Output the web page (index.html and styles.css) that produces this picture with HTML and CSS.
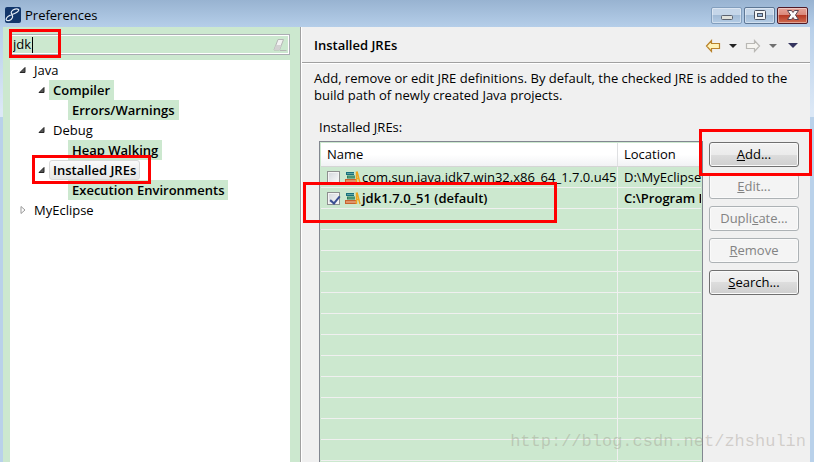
FILE: index.html
```html
<!DOCTYPE html>
<html lang="en">
<head>
  <meta charset="UTF-8">
  <meta name="viewport" content="width=device-width, initial-scale=1.0">
  <title>Preferences</title>
  <link rel="stylesheet" href="styles.css">
</head>
<body>
  <div class="window">
    <header class="titlebar">
      <svg class="titlebar__logo" width="16" height="16" viewBox="0 0 16 16">
        <rect width="16" height="16" rx="2" fill="#12366b"/>
        <path d="M1 12.500C2 14.500 6 14 7.500 10.500C8.500 8 5 6.500 6.500 4.500S12 1 13.500 2.500S10 6.500 7 7.500S1.500 10 1 12.500" fill="none" stroke="#e4ecf5" stroke-width="1.200"/>
      </svg>
      <h1 class="titlebar__text">Preferences</h1>
      <div class="titlebar__buttons">
        <button class="win-button win-button--min" aria-label="Minimize">
          <svg width="12" height="12" viewBox="0 0 12 12"><rect x="0.500" y="6.500" width="11" height="4" rx="1" fill="#dfe1dc" stroke="#5b6270"/></svg>
        </button>
        <button class="win-button" aria-label="Maximize">
          <svg width="12" height="12" viewBox="0 0 12 12"><rect x="0.500" y="1.500" width="11" height="9" rx="1" fill="#f5f5f5" stroke="#4a5160"/><rect x="3.500" y="4.500" width="5" height="3" fill="#9cb9da" stroke="#4a5160"/></svg>
        </button>
        <button class="win-button win-button--close" aria-label="Close">
          <svg width="12" height="12" viewBox="0 0 12 12"><path d="M.500 1.500h4L6 3.500l1.500-2h4L8.500 6l3 4.500h-4L6 8.500l-1.500 2h-4l3-4.500z" fill="#fafafa" stroke="#5b4450"/></svg>
        </button>
      </div>
    </header>

    <div class="content">
      <aside class="sidebar">
        <div class="search">
          <input class="search__input" type="text" value="jdk" aria-label="Filter preferences">
          <span class="search__caret"></span>
          <button class="search__clear" aria-label="Clear">
            <svg width="14" height="14" viewBox="0 0 14 14"><path d="M5 1.500h5.500l-4 10.500H1z" fill="#f2f2f2" stroke="#b5b5b5"/><path d="M3 7h5.500L6.500 12H1z" fill="#d2d2d2"/><path d="M7 12.500h6.500" stroke="#b5b5b5"/></svg>
          </button>
          <span class="mark mark--search"></span>
        </div>

        <ul class="tree">
          <li>
            <div class="tree__row"><svg class="tree__arrow" width="8" height="8" viewBox="0 0 8 8"><path d="M6 1.500V6.500H1z" fill="#555" stroke="#262626"/></svg><span class="tree__label">Java</span></div>
            <ul>
              <li>
                <div class="tree__row"><svg class="tree__arrow" width="8" height="8" viewBox="0 0 8 8"><path d="M6 1.500V6.500H1z" fill="#555" stroke="#262626"/></svg><span class="tree__label tree__label--match">Compiler</span></div>
                <ul>
                  <li><div class="tree__row tree__row--leaf"><span class="tree__label tree__label--match">Errors/Warnings</span></div></li>
                </ul>
              </li>
              <li>
                <div class="tree__row"><svg class="tree__arrow" width="8" height="8" viewBox="0 0 8 8"><path d="M6 1.500V6.500H1z" fill="#555" stroke="#262626"/></svg><span class="tree__label">Debug</span></div>
                <ul>
                  <li><div class="tree__row tree__row--leaf"><span class="tree__label tree__label--match">Heap Walking</span></div></li>
                </ul>
              </li>
              <li>
                <div class="tree__row"><svg class="tree__arrow" width="8" height="8" viewBox="0 0 8 8"><path d="M6 1.500V6.500H1z" fill="#555" stroke="#262626"/></svg><span class="tree__label tree__label--selected">Installed JREs</span><span class="mark mark--tree"></span></div>
                <ul>
                  <li><div class="tree__row tree__row--leaf"><span class="tree__label tree__label--match">Execution Environments</span></div></li>
                </ul>
              </li>
            </ul>
          </li>
          <li>
            <div class="tree__row"><svg class="tree__arrow" width="8" height="8" viewBox="0 0 8 8"><path d="M2 .500L6 4 2 7.500z" fill="#fff" stroke="#999"/></svg><span class="tree__label">MyEclipse</span></div>
          </li>
        </ul>
      </aside>

      <main class="page">
        <div class="page__header">
          <h2 class="page__title">Installed JREs</h2>
          <nav class="page__nav">
            <button class="nav-button" aria-label="Back"><svg width="16" height="14" viewBox="0 0 16 14"><path d="M1.500 7l5-5.500v3h8v5h-8v3z" fill="#fff3b8" stroke="#b9822b" stroke-width="1.200"/></svg></button>
            <button class="nav-button" aria-label="Back history"><svg width="8" height="4" viewBox="0 0 8 4"><path d="M0 0h8L4 4z" fill="#222"/></svg></button>
            <button class="nav-button nav-button--next" aria-label="Forward" disabled><svg width="16" height="14" viewBox="0 0 16 14"><path d="M14.500 7l-5-5.500v3h-8v5h8v3z" fill="#f6f5f1" stroke="#b9b8b4" stroke-width="1.200"/></svg></button>
            <button class="nav-button" aria-label="Forward history" disabled><svg width="8" height="4" viewBox="0 0 8 4"><path d="M0 0h8L4 4z" fill="#707070"/></svg></button>
            <button class="nav-button nav-button--menu" aria-label="Menu"><svg width="10" height="5" viewBox="0 0 10 5"><path d="M0 0h10L5 5z" fill="#34345e"/></svg></button>
          </nav>
        </div>

        <div class="page__body">
          <p class="page__text">Add, remove or edit JRE definitions. By default, the checked JRE is added to the build path of newly created Java projects.</p>
          <p class="page__label" id="jres">Installed <u>J</u>REs:</p>

          <div class="jre">
            <div class="jre__list">
              <table class="jre__table" aria-labelledby="jres">
                <thead>
                  <tr><th class="jre__name">Name</th><th>Location</th></tr>
                </thead>
                <tbody>
                  <tr>
                    <td>
                      <label class="jre__item">
                        <input class="jre__check" type="checkbox">
                        <svg width="16" height="14" viewBox="0 0 16 14"><path d="M1 2h8v3H1z" fill="#17707e"/><path d="M2 5.500h8v3H2z" fill="#2d7f59"/><path d="M2 3.500h7M3 7h7" stroke="#8fc6ba" stroke-width=".600"/><path d="M0 9h11v4H0z" fill="#c8622f"/><path d="M1 11h10" stroke="#f3c7a5"/><path d="M11.500 1.500V13M12 1.500L15 13M11 8.500h3" fill="none" stroke="#eda51f" stroke-width="1.500"/></svg>
                        <span>com.sun.java.jdk7.win32.x86_64_1.7.0.u45</span>
                      </label>
                    </td>
                    <td>D:\MyEclipse.</td>
                  </tr>
                  <tr class="jre__default">
                    <td>
                      <label class="jre__item">
                        <input class="jre__check" type="checkbox" checked>
                        <svg width="16" height="14" viewBox="0 0 16 14"><path d="M1 2h8v3H1z" fill="#17707e"/><path d="M2 5.500h8v3H2z" fill="#2d7f59"/><path d="M2 3.500h7M3 7h7" stroke="#8fc6ba" stroke-width=".600"/><path d="M0 9h11v4H0z" fill="#c8622f"/><path d="M1 11h10" stroke="#f3c7a5"/><path d="M11.500 1.500V13M12 1.500L15 13M11 8.500h3" fill="none" stroke="#eda51f" stroke-width="1.500"/></svg>
                        <span>jdk1.7.0_51 (default)</span>
                      </label>
                    </td>
                    <td>C:\Program F</td>
                  </tr>
                </tbody>
              </table>
            </div>
            <div class="jre__actions">
              <button class="button"><u>A</u>dd...</button>
              <button class="button" disabled><u>E</u>dit...</button>
              <button class="button" disabled>Dupli<u>c</u>ate...</button>
              <button class="button" disabled><u>R</u>emove</button>
              <button class="button"><u>S</u>earch...</button>
              <span class="mark mark--add"></span>
            </div>
            <span class="mark mark--jdk"></span>
          </div>
        </div>
      </main>
    </div>
    <span class="watermark">http://blog.csdn.net/zhshulin</span>
  </div>
</body>
</html>
```
FILE: styles.css
```css
* {
  box-sizing: border-box;
  margin: 0;
  padding: 0;
}

body {
  font-family: "Open Sans", "Noto Sans", sans-serif;
  font-size: 13px;
  line-height: 17px;
  color: #000;
}

button,
input {
  font: inherit;
  color: inherit;
}

svg {
  display: block;
  flex: none;
}

ul {
  list-style: none;
}

.window {
  position: relative;
  display: flex;
  flex-direction: column;
  height: 100vh;
  overflow: hidden;
  background: linear-gradient(#b7cfe9 27px, #dce8f6 110px, #dce8f6 117px, #b9d1ea 117px);
}

/* title bar */
.titlebar {
  display: flex;
  align-items: center;
  height: 27px;
  padding: 3px 6px 0 5px;
  background: linear-gradient(#98b3d1, #b5cee9);
}

.titlebar__text {
  flex: 1;
  margin-left: 4px;
  font-size: 13px;
  font-weight: normal;
}

.titlebar__buttons {
  display: flex;
  gap: 2px;
}

.win-button {
  display: flex;
  align-items: center;
  justify-content: center;
  width: 31px;
  height: 17px;
  border: 1px solid #5d7795;
  border-radius: 2px;
  background: linear-gradient(#c5d6e9 50%, #a2bbd6 50%, #b4cce5);
  box-shadow: inset 0 0 0 1px rgba(255, 255, 255, 0.4);
}

.win-button--min {
  border-color: #839fbe;
}

.win-button--close {
  border-color: #501a26;
  background: linear-gradient(#e6a499, #d98577 50%, #b63a25 50%, #cf6b50);
}

.content {
  flex: 1;
  display: flex;
  min-height: 0;
  padding: 0 4px 0 3px;
}

/* left side */
.sidebar {
  display: flex;
  flex-direction: column;
  gap: 5px;
  width: 298px;
  flex: none;
  padding: 7px 10px 0 7px;
  background: #cce8cf;
  border-right: 1px solid #a0a0a0;
}

.search {
  position: relative;
  display: flex;
  align-items: center;
  height: 21px;
  border: 1px solid #abadb3;
  box-shadow: inset 0 0 0 1px #fff;
}

.search__input {
  flex: 1;
  min-width: 0;
  padding-left: 2px;
  border: none;
  outline: none;
  background: none;
}

.search__caret {
  position: absolute;
  left: 21px;
  top: 2px;
  width: 1px;
  height: 16px;
  background: #000;
}

.search__clear {
  margin-right: 2px;
  border: none;
  background: none;
}

.tree {
  flex: 1;
  padding-left: 9px;
  background: #fff;
}

.tree ul {
  padding-left: 19px;
}

.tree__row {
  position: relative;
  display: flex;
  align-items: center;
  height: 20px;
}

.tree__row--leaf {
  padding-left: 11px;
}

.tree__arrow {
  margin-right: 3px;
}

.tree__label {
  padding: 0 4px;
  line-height: 20px;
}

.tree__label--match {
  background: #cce8cf;
  font-weight: 600;
}

.tree__label--selected {
  padding: 0 3px;
  border: 1px solid #d9d9d9;
  border-radius: 3px;
  background: linear-gradient(#fafafa, #e6e6e6);
  font-weight: 600;
  line-height: 18px;
}

/* right side */
.page {
  flex: 1;
  display: flex;
  flex-direction: column;
  min-width: 0;
  border-left: 1px solid #fff;
  background: #f0f0f0;
}

.page__header {
  display: flex;
  align-items: center;
  justify-content: space-between;
  height: 36px;
  padding: 2px 12px 0 12px;
  border-bottom: 1px solid #a0a0a0;
}

.page__title {
  font-size: 13px;
  font-weight: 600;
}

.page__nav {
  display: flex;
  align-items: center;
  gap: 8px;
}

.nav-button {
  border: none;
  background: none;
}

.nav-button--menu {
  margin-left: 3px;
}

.page__body {
  flex: 1;
  display: flex;
  flex-direction: column;
  min-height: 0;
  padding: 6px 11px 0 12px;
  border-top: 1px solid #fff;
}

.page__label {
  margin: 15px 0 5px 5px;
}

.jre {
  position: relative;
  flex: 1;
  display: flex;
  gap: 6px;
  min-height: 0;
  margin-left: 5px;
}

/* empty rows below the data */
.jre__list {
  flex: 1;
  min-width: 0;
  overflow: hidden;
  padding: 1px 1px 0 1px;
  border: 1px solid #828790;
  border-bottom: none;
  background:
    linear-gradient(#f0f0f0, #f0f0f0) 296px 0 / 1px 100% no-repeat content-box,
    repeating-linear-gradient(transparent 0 20px, #f0f0f0 20px 21px) 0 3px content-box,
    #cce8cf;
}

.jre__table {
  width: 100%;
  table-layout: fixed;
  border-collapse: separate;
  border-spacing: 0;
}

.jre__name {
  width: 297px;
}

.jre__table th {
  height: 24px;
  padding-left: 6px;
  border-right: 1px solid #dfe0e2;
  border-bottom: 1px solid #d5d5d5;
  background: linear-gradient(#fff 50%, #f1f2f4);
  font-weight: normal;
  text-align: left;
}

.jre__table td {
  height: 21px;
  padding-left: 6px;
  border-right: 1px solid #f0f0f0;
  border-bottom: 1px solid #f0f0f0;
  background: #cce8cf;
  overflow: hidden;
  white-space: nowrap;
}

.jre__table th:last-child,
.jre__table td:last-child {
  border-right: none;
}

.jre__default {
  font-weight: 600;
}

.jre__item {
  display: flex;
  align-items: center;
}

.jre__item svg {
  margin: 0 1px 0 5px;
}

.jre__check {
  appearance: none;
  flex: none;
  position: relative;
  width: 13px;
  height: 13px;
  border: 1px solid #8e8f8f;
  background: linear-gradient(135deg, #d3d6db, #fbfbfb);
  box-shadow: inset 0 0 0 1px #f4f4f4;
}

.jre__check:checked::after {
  content: "";
  position: absolute;
  left: 4px;
  top: 1px;
  width: 4px;
  height: 8px;
  border: solid #3b4f92;
  border-width: 0 2px 2px 0;
  transform: rotate(40deg);
}

.jre__actions {
  position: relative;
  display: flex;
  flex-direction: column;
  gap: 7px;
  width: 90px;
  padding-top: 1px;
}

.button {
  height: 25px;
  flex: none;
  border: 1px solid #707070;
  border-radius: 3px;
  background: linear-gradient(#f2f2f2, #ebebeb 50%, #dddddd 50%, #cfcfcf);
  box-shadow: inset 0 0 0 1px #fafafa;
}

.button:disabled {
  border-color: #adb2b5;
  background: #f4f4f4;
  color: #838383;
}

/* red frames */
.mark {
  position: absolute;
  z-index: 1;
  border: 3px solid #f00;
  pointer-events: none;
}

.mark--search {
  left: -2px;
  top: -6px;
  width: 52px;
  height: 29px;
}

.mark--tree {
  left: -6px;
  top: -5px;
  width: 119px;
  height: 29px;
}

.mark--add {
  left: -10px;
  top: -12px;
  width: 113px;
  height: 47px;
}

.mark--jdk {
  left: -16px;
  top: 41px;
  width: 254px;
  height: 41px;
}

.watermark {
  position: absolute;
  right: 8px;
  bottom: 9px;
  font-family: "Liberation Mono", monospace;
  font-size: 17px;
  line-height: 22px;
  color: rgba(150, 140, 130, 0.35);
}
```
